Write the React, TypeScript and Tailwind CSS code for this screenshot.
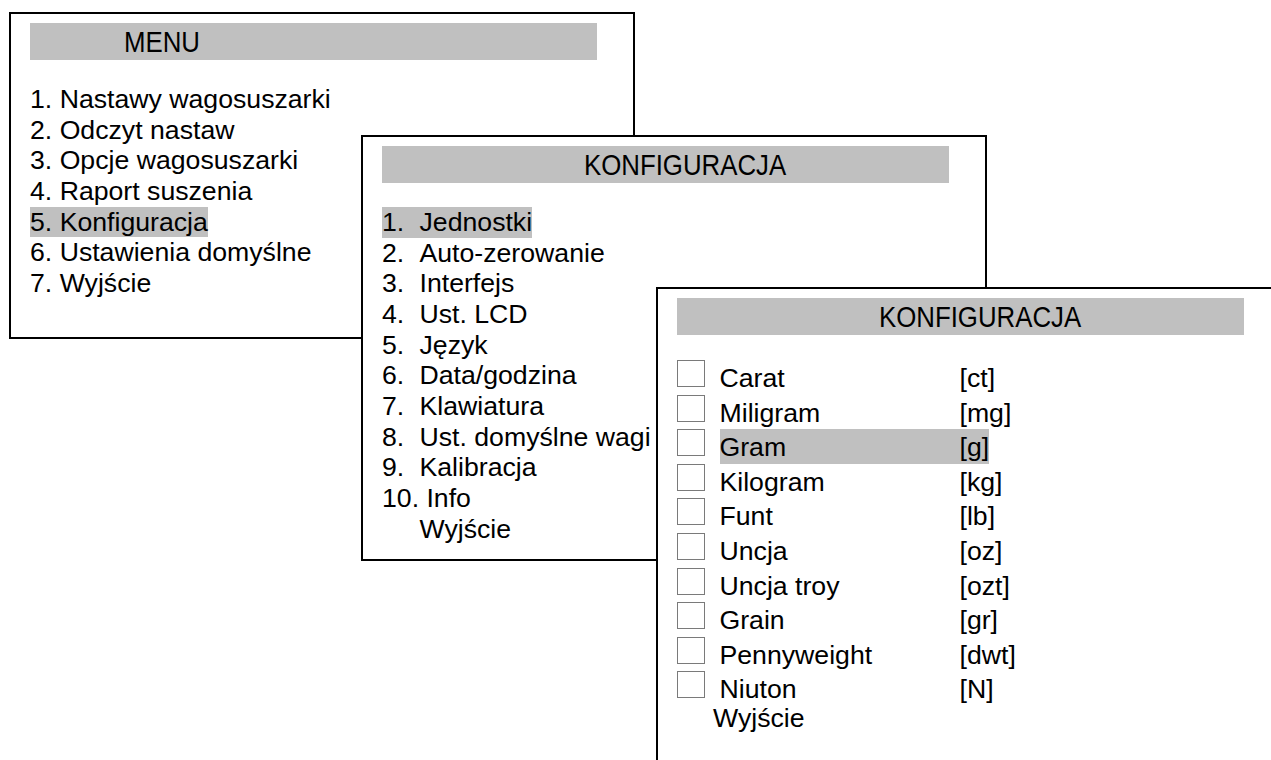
import React from 'react';

type PanelProps = {
  className: string;
  title: string;
  titleIndent: string;
  children: React.ReactNode;
};

const menuItems = [
  '1. Nastawy wagosuszarki',
  '2. Odczyt nastaw',
  '3. Opcje wagosuszarki',
  '4. Raport suszenia',
  '5. Konfiguracja',
  '6. Ustawienia domyślne',
  '7. Wyjście',
];

const configItems = [
  'Jednostki',
  'Auto-zerowanie',
  'Interfejs',
  'Ust. LCD',
  'Język',
  'Data/godzina',
  'Klawiatura',
  'Ust. domyślne wagi',
  'Kalibracja',
];

const units = [
  { name: 'Carat', unit: '[ct]' },
  { name: 'Miligram', unit: '[mg]' },
  { name: 'Gram', unit: '[g]' },
  { name: 'Kilogram', unit: '[kg]' },
  { name: 'Funt', unit: '[lb]' },
  { name: 'Uncja', unit: '[oz]' },
  { name: 'Uncja troy', unit: '[ozt]' },
  { name: 'Grain', unit: '[gr]' },
  { name: 'Pennyweight', unit: '[dwt]' },
  { name: 'Niuton', unit: '[N]' },
];

// a window of the menu screen: black frame, grey title bar
function Panel({ className, title, titleIndent, children }: PanelProps) {
  return (
    <div className={`absolute w-[626px] border-2 border-black bg-white pl-[19px] pt-[9px] ${className}`}>
      <div className={`h-[37px] w-[567px] bg-[#c0c0c0] ${titleIndent}`}>
        <span className="inline-block origin-left scale-x-[0.86] whitespace-nowrap text-[30px] leading-[37px]">
          {title}
        </span>
      </div>
      {children}
    </div>
  );
}

export default function App() {
  const selectedMenu = 4;
  const selectedConfig = 0;
  const selectedUnit = 2;

  return (
    <div className="relative h-[760px] w-[1271px] overflow-hidden bg-white font-[family-name:'Liberation_Sans',Arial,sans-serif] text-[26.67px] text-black">
      {/* main menu */}
      <Panel className="left-[9px] top-[12px] h-[327px]" title="MENU" titleIndent="pl-[94px]">
        <div className="mt-[24px] leading-[30.67px]">
          {menuItems.map((item, i) => (
            <div key={item}>
              <span className={`inline-block whitespace-pre ${i === selectedMenu ? 'bg-[#c0c0c0]' : ''}`}>
                {item}
              </span>
            </div>
          ))}
        </div>
      </Panel>

      {/* configuration submenu */}
      <Panel className="left-[361px] top-[135px] h-[426px]" title="KONFIGURACJA" titleIndent="pl-[202px]">
        <div className="mt-[24px] leading-[30.67px]">
          {configItems.map((item, i) => (
            <div key={item}>
              <span className={`inline-flex ${i === selectedConfig ? 'bg-[#c0c0c0]' : ''}`}>
                <span className="w-[37.5px]">{i + 1}.</span>
                <span className="whitespace-nowrap">{item}</span>
              </span>
            </div>
          ))}
          <div className="whitespace-pre">10. Info</div>
          <div className="pl-[37.5px]">Wyjście</div>
        </div>
      </Panel>

      {/* units list */}
      <Panel className="left-[656px] top-[287px] h-[500px]" title="KONFIGURACJA" titleIndent="pl-[202px]">
        <div className="mt-[25px]">
          {units.map((u, i) => (
            <div key={u.name} className="flex h-[34.6px] items-start">
              <div className="h-[27px] w-[28px] shrink-0 border-[1.5px] border-[#7a7a7a]" />
              <div
                className={`ml-[14.5px] flex h-[34.6px] leading-[36px] ${i === selectedUnit ? 'bg-[#c0c0c0]' : ''}`}
              >
                <span className="w-[240px] whitespace-nowrap">{u.name}</span>
                <span>{u.unit}</span>
              </div>
            </div>
          ))}
          <div className="pl-[36px] leading-[24px]">Wyjście</div>
        </div>
      </Panel>
    </div>
  );
}
